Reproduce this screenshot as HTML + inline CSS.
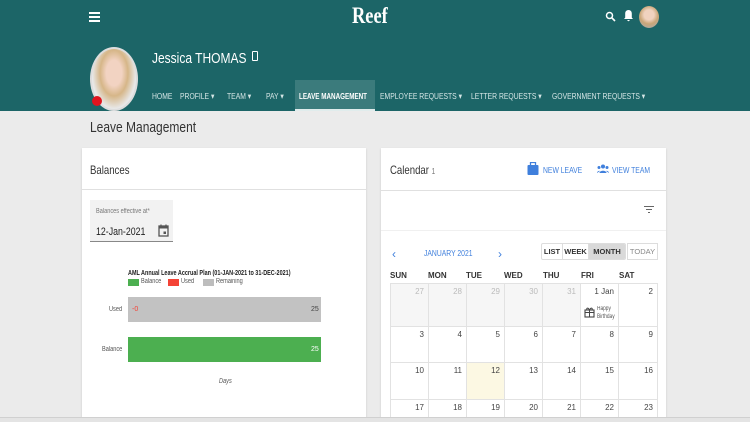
<!DOCTYPE html>
<html><head><meta charset="utf-8"><style>
*{margin:0;padding:0;box-sizing:border-box}
html,body{width:750px;height:422px;overflow:hidden}
body{background:#ebebeb;font-family:"Liberation Sans",sans-serif;position:relative;color:#333}
.a{position:absolute}
.t{transform:scaleX(.8);transform-origin:0 0;white-space:nowrap}
.hdr{left:0;top:0;width:750px;height:111px;background:#1c6567}
.nav{top:91px;font-size:8.5px;color:#d5e6e6;white-space:nowrap}
.card{background:#fff;box-shadow:0 1px 2px rgba(0,0,0,.15)}
.cell{position:absolute;border-right:1px solid #e2e2e2;border-bottom:1px solid #e2e2e2;font-size:8px;text-align:right;padding:3px 4px 0 0;color:#444}
.g{background:#f6f6f6;color:#bbb}
.dh{position:absolute;top:271px;font-size:8px;font-weight:bold;color:#333}
</style></head><body>
<div class="a hdr"></div>
<div class="a" style="left:89px;top:12px;width:11px;height:2px;background:#fff;box-shadow:0 4px 0 #fff,0 8px 0 #fff"></div>
<div class="a t" style="left:352px;top:3px;font-family:'Liberation Serif',serif;font-weight:bold;font-size:23px;color:#fff">Reef</div>
<svg class="a" style="left:605px;top:11px" width="11" height="11" viewBox="0 0 11 11"><circle cx="4.5" cy="4.5" r="3" fill="none" stroke="#fff" stroke-width="1.5"/><path d="M7 7l3 3" stroke="#fff" stroke-width="1.6"/></svg>
<svg class="a" style="left:623px;top:9px" width="11" height="14" viewBox="0 0 11 14"><path d="M5.5 1c-2 0-3.3 1.5-3.3 3.6v4L1 10h9L8.8 8.6v-4C8.8 2.5 7.5 1 5.5 1zM4.3 11h2.4a1.2 1.2 0 01-2.4 0z" fill="#fff"/></svg>
<div class="a" style="left:639px;top:6px;width:20px;height:22px;border-radius:50%;background:radial-gradient(circle at 50% 40%,#f0d2bf 30%,#c9a678 55%,#aaa 90%)"></div>
<div class="a" style="left:90px;top:47px;width:48px;height:64px;border-radius:50%;background:radial-gradient(ellipse at 50% 40%,#f2d3c2 25%,#d6b688 45%,#e8e8e8 70%);border:2px solid #ddd"></div>
<div class="a" style="left:92px;top:96px;width:10px;height:10px;border-radius:50%;background:#e0141e"></div>
<div class="a t" style="left:152px;top:50px;font-size:15px;color:#fff">Jessica THOMAS</div>
<div class="a" style="left:252px;top:51px;width:6px;height:10px;border:1.5px solid #fff;border-radius:1px"></div>
<div class="a" style="left:295px;top:80px;width:80px;height:31px;background:#3b7b7c"></div>
<div class="a" style="left:295px;top:109px;width:80px;height:2px;background:#e0ecec"></div>
<div class="a nav t" style="left:152px">HOME</div>
<div class="a nav t" style="left:180px">PROFILE ▾</div>
<div class="a nav t" style="left:227px">TEAM ▾</div>
<div class="a nav t" style="left:266px">PAY ▾</div>
<div class="a nav t" style="left:299px;color:#fff;font-weight:bold;transform:scaleX(.74)">LEAVE MANAGEMENT</div>
<div class="a nav t" style="left:380px">EMPLOYEE REQUESTS ▾</div>
<div class="a nav t" style="left:471px">LETTER REQUESTS ▾</div>
<div class="a nav t" style="left:552px">GOVERNMENT REQUESTS ▾</div>
<div class="a t" style="left:90px;top:119px;font-size:15px;color:#333">Leave Management</div>

<div class="a card" style="left:82px;top:148px;width:284px;height:280px"></div>
<div class="a t" style="left:90px;top:163px;font-size:12px">Balances</div>
<div class="a" style="left:82px;top:189px;width:284px;height:1px;background:#e0e0e0"></div>
<div class="a" style="left:90px;top:200px;width:83px;height:42px;background:#f2f2f2;border-bottom:1px solid #888"></div>
<div class="a t" style="left:96px;top:208px;font-size:7px;color:#777">Balances effective at*</div>
<div class="a t" style="left:96px;top:226px;font-size:11px;color:#222">12-Jan-2021</div>
<svg class="a" style="left:158px;top:224px" width="11" height="13" viewBox="0 0 11 13"><rect x="1" y="2" width="9" height="10" fill="none" stroke="#555" stroke-width="1.3"/><rect x="1" y="2" width="9" height="2.5" fill="#555"/><rect x="5.5" y="7.5" width="2.5" height="2.5" fill="#555"/><path d="M3 0.5v2M8 0.5v2" stroke="#555" stroke-width="1.2"/></svg>
<div class="a t" style="left:128px;top:268px;font-size:7.2px;font-weight:bold;color:#222;transform:scaleX(.76)">AML Annual Leave Accrual Plan (01-JAN-2021 to 31-DEC-2021)</div>
<div class="a" style="left:128px;top:279px;width:11px;height:7px;background:#4caf50"></div>
<div class="a t" style="left:141px;top:278px;font-size:7px;color:#555">Balance</div>
<div class="a" style="left:168px;top:279px;width:11px;height:7px;background:#f44336"></div>
<div class="a t" style="left:181px;top:278px;font-size:7px;color:#555">Used</div>
<div class="a" style="left:203px;top:279px;width:11px;height:7px;background:#bdbdbd"></div>
<div class="a t" style="left:216px;top:278px;font-size:7px;color:#555">Remaining</div>
<div class="a t" style="left:109px;top:306px;font-size:7px;color:#555">Used</div>
<div class="a" style="left:128px;top:297px;width:193px;height:25px;background:#c2c2c2"></div>
<div class="a" style="left:132px;top:306px;font-size:7px;color:#f44336">-0</div>
<div class="a" style="left:311px;top:306px;font-size:7px;color:#444">25</div>
<div class="a t" style="left:102px;top:346px;font-size:7px;color:#555">Balance</div>
<div class="a" style="left:128px;top:337px;width:193px;height:25px;background:#4caf50"></div>
<div class="a" style="left:311px;top:346px;font-size:7px;color:#fff">25</div>
<div class="a t" style="left:219px;top:378px;font-size:7px;font-style:italic;color:#555">Days</div>

<div class="a card" style="left:381px;top:148px;width:285px;height:280px"></div>
<div class="a t" style="left:390px;top:163px;font-size:12px">Calendar <span style="font-size:8px;color:#777">1</span></div>
<svg class="a" style="left:527px;top:162px" width="12" height="13" viewBox="0 0 12 13"><rect x="0.5" y="3" width="11" height="10" rx="1" fill="#3f7fdc"/><rect x="3.5" y="0.5" width="5" height="3.5" fill="none" stroke="#3f7fdc" stroke-width="1.3"/></svg>
<div class="a t" style="left:543px;top:165px;font-size:8.5px;color:#3f7fdc">NEW LEAVE</div>
<svg class="a" style="left:597px;top:164px" width="12" height="9" viewBox="0 0 12 9"><circle cx="6" cy="2.5" r="2" fill="#3f7fdc"/><circle cx="2" cy="3.5" r="1.5" fill="#3f7fdc"/><circle cx="10" cy="3.5" r="1.5" fill="#3f7fdc"/><path d="M2.5 9c0-3 7-3 7 0zM0 9c0-2 2.5-2.5 3-2zM12 9c0-2-2.5-2.5-3-2z" fill="#3f7fdc"/></svg>
<div class="a t" style="left:612px;top:165px;font-size:8.5px;color:#3f7fdc">VIEW TEAM</div>
<div class="a" style="left:381px;top:190px;width:285px;height:1px;background:#e0e0e0"></div>
<div class="a" style="left:644px;top:206px;width:10px;height:1.3px;background:#666"></div>
<div class="a" style="left:646px;top:209px;width:6px;height:1.3px;background:#666"></div>
<div class="a" style="left:648px;top:212px;width:2px;height:1.3px;background:#666"></div>
<div class="a" style="left:381px;top:230px;width:285px;height:1px;background:#f0f0f0"></div>
<div class="a" style="left:392px;top:247px;font-size:12px;color:#3f7fdc">‹</div>
<div class="a t" style="left:424px;top:248px;font-size:8.5px;color:#3f7fdc">JANUARY 2021</div>
<div class="a" style="left:498px;top:247px;font-size:12px;color:#3f7fdc">›</div>
<div class="a" style="left:541px;top:243px;width:85px;height:17px;border:1px solid #ddd;border-radius:2px;font-size:7.5px;font-weight:bold;color:#333;display:flex;overflow:hidden">
<div style="width:21px;text-align:center;line-height:15px;border-right:1px solid #ddd">LIST</div>
<div style="width:26px;text-align:center;line-height:15px;border-right:1px solid #ddd">WEEK</div>
<div style="flex:1;text-align:center;line-height:15px;background:#d9d9d9">MONTH</div></div>
<div class="a" style="left:627px;top:243px;width:31px;height:17px;border:1px solid #ddd;font-size:7.5px;color:#888;text-align:center;line-height:15px;background:#fff">TODAY</div>
<div class="dh" style="left:390px">SUN</div><div class="dh" style="left:428px">MON</div><div class="dh" style="left:466px">TUE</div><div class="dh" style="left:504px">WED</div><div class="dh" style="left:543px">THU</div><div class="dh" style="left:581px">FRI</div><div class="dh" style="left:619px">SAT</div>
<div class="a" style="left:390px;top:283px;width:268px;height:140px;border-left:1px solid #e2e2e2;border-top:1px solid #e2e2e2"></div>
<div class="cell g" style="left:391px;top:284px;width:38px;height:43px">27</div>
<div class="cell g" style="left:429px;top:284px;width:38px;height:43px">28</div>
<div class="cell g" style="left:467px;top:284px;width:38px;height:43px">29</div>
<div class="cell g" style="left:505px;top:284px;width:38px;height:43px">30</div>
<div class="cell g" style="left:543px;top:284px;width:38px;height:43px">31</div>
<div class="cell" style="left:581px;top:284px;width:38px;height:43px">1 Jan</div>
<div class="cell" style="left:619px;top:284px;width:39px;height:43px">2</div>
<svg class="a" style="left:584px;top:307px" width="11" height="11" viewBox="0 0 11 11"><rect x="1" y="3" width="9" height="7" fill="none" stroke="#444" stroke-width="1.1"/><path d="M1 5.5h9M5.5 3v7M5.5 3C4 0 2 1 3 3M5.5 3C7 0 9 1 8 3" fill="none" stroke="#444" stroke-width="1"/></svg>
<div class="a t" style="left:597px;top:305px;font-size:6px;color:#555;line-height:8px">Happy<br>Birthday</div>
<div class="cell" style="left:391px;top:327px;width:38px;height:36px">3</div>
<div class="cell" style="left:429px;top:327px;width:38px;height:36px">4</div>
<div class="cell" style="left:467px;top:327px;width:38px;height:36px">5</div>
<div class="cell" style="left:505px;top:327px;width:38px;height:36px">6</div>
<div class="cell" style="left:543px;top:327px;width:38px;height:36px">7</div>
<div class="cell" style="left:581px;top:327px;width:38px;height:36px">8</div>
<div class="cell" style="left:619px;top:327px;width:39px;height:36px">9</div>
<div class="cell" style="left:391px;top:363px;width:38px;height:37px">10</div>
<div class="cell" style="left:429px;top:363px;width:38px;height:37px">11</div>
<div class="cell" style="left:467px;top:363px;width:38px;height:37px;background:#fcf8e3">12</div>
<div class="cell" style="left:505px;top:363px;width:38px;height:37px">13</div>
<div class="cell" style="left:543px;top:363px;width:38px;height:37px">14</div>
<div class="cell" style="left:581px;top:363px;width:38px;height:37px">15</div>
<div class="cell" style="left:619px;top:363px;width:39px;height:37px">16</div>
<div class="cell" style="left:391px;top:400px;width:38px;height:30px">17</div>
<div class="cell" style="left:429px;top:400px;width:38px;height:30px">18</div>
<div class="cell" style="left:467px;top:400px;width:38px;height:30px">19</div>
<div class="cell" style="left:505px;top:400px;width:38px;height:30px">20</div>
<div class="cell" style="left:543px;top:400px;width:38px;height:30px">21</div>
<div class="cell" style="left:581px;top:400px;width:38px;height:30px">22</div>
<div class="cell" style="left:619px;top:400px;width:39px;height:30px">23</div>
<div class="a" style="left:0;top:417px;width:750px;height:5px;background:#e4e4e4;border-top:1px solid #d0d0d0"></div>
</body></html>
